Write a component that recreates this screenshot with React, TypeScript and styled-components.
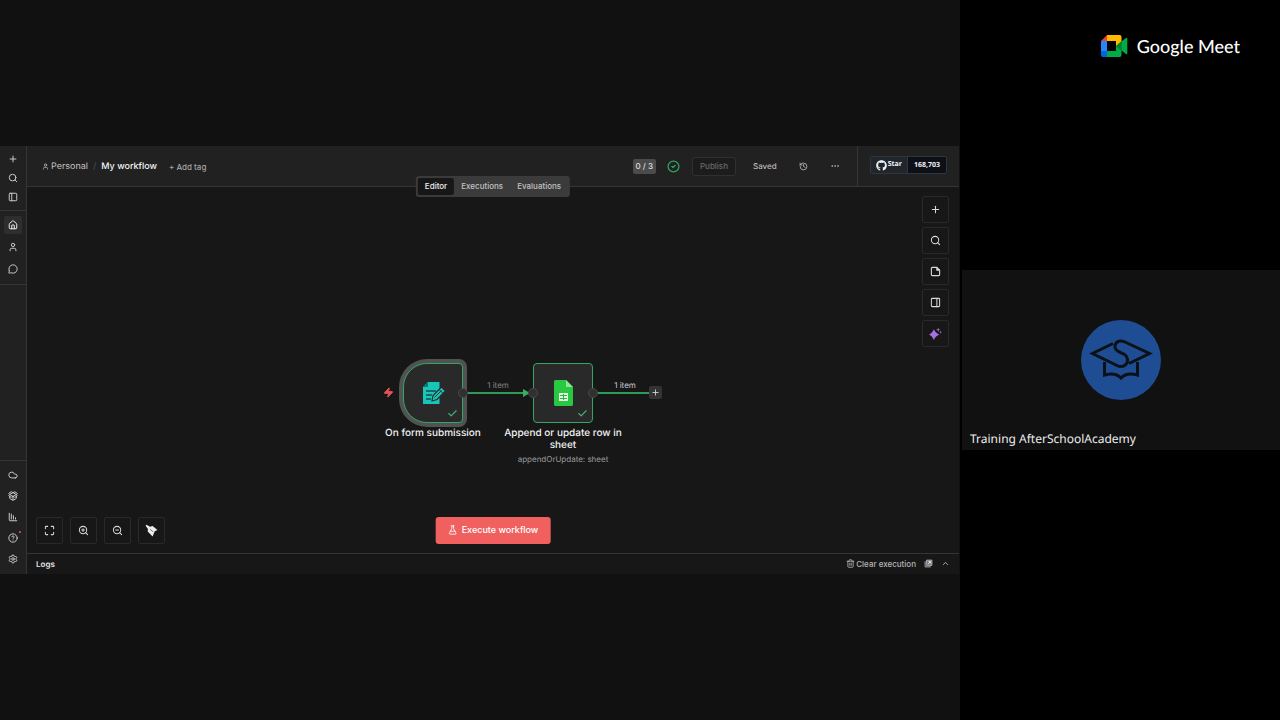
import React from "react";
import styled, { createGlobalStyle, css } from "styled-components";
import {
  ChartColumnDecreasing,
  Check,
  ChevronUp,
  CircleCheck,
  CircleQuestionMark,
  Cloud,
  Ellipsis,
  FlaskConical,
  History,
  House,
  Maximize,
  MessageCircle,
  PackageOpen,
  PanelLeft,
  PanelRight,
  Plus,
  Search,
  Settings,
  Trash2,
  User,
  Zap,
  ZoomIn,
  ZoomOut,
} from "lucide-react";
import { FaGithub } from "react-icons/fa";

const GlobalStyle = createGlobalStyle`
  * { box-sizing: border-box; }
  body {
    margin: 0;
    background: #000;
    font-family: Inter, "Liberation Sans", sans-serif;
    text-rendering: geometricPrecision;
  }
  button { font: inherit; color: inherit; border: 0; padding: 0; background: none; cursor: pointer; }
  a { color: inherit; text-decoration: none; }
  p, h1, h2 { margin: 0; }
  svg { display: block; flex-shrink: 0; }
`;

const Call = styled.div`
  display: grid;
  grid-template-columns: 3fr 1fr;
  min-height: 100vh;
`;

const Presentation = styled.main`
  display: flex;
  align-items: center;
  background: #111111;
`;

const Editor = styled.div`
  flex: 1;
  display: flex;
  aspect-ratio: 960 / 428;
  margin-right: 1px;
  min-width: 0;
  background: #171717;
  color: #c4c4c4;
  font-size: 9px;
  line-height: 12px;
`;

/* Sidebar */

const Sidebar = styled.nav`
  display: flex;
  flex-direction: column;
  width: 27px;
  background: #212121;
  border-right: 1px solid #353535;
`;

const NavGroup = styled.div<{ $tight?: boolean; $bottom?: boolean }>`
  display: flex;
  flex-direction: column;
  align-items: center;
  gap: ${(p) => (p.$tight ? 1 : p.$bottom ? 3 : 4)}px;
  padding: 5px 0 6px;
  ${(p) =>
    p.$bottom
      ? css`
          margin-top: auto;
          border-top: 1px solid #353535;
        `
      : css`
          border-bottom: 1px solid #353535;
        `}
  ${(p) => p.$tight && "padding: 4px 0;"}
`;

const NavButton = styled.button<{ $active?: boolean }>`
  position: relative;
  display: grid;
  place-items: center;
  width: 18px;
  height: 18px;
  border-radius: 2px;
  color: ${(p) => (p.$active ? "#f0f0f0" : "#c8c8c8")};
  background: ${(p) => (p.$active ? "#2e2e2e" : "transparent")};
`;

const Dot = styled.span`
  position: absolute;
  top: 2px;
  right: 1px;
  width: 2px;
  height: 2px;
  border-radius: 50%;
  background: #e0566a;
`;

/* Header */

const Workspace = styled.div`
  flex: 1;
  display: flex;
  flex-direction: column;
  min-width: 0;
`;

const Header = styled.header`
  position: relative;
  display: flex;
  height: 41px;
  background: #212121;
  border-bottom: 1px solid #353535;
`;

const Breadcrumb = styled.div`
  display: flex;
  align-items: center;
  gap: 5px;
  padding: 1px 0 0 15px;
`;

const Crumb = styled.a`
  display: flex;
  align-items: center;
  gap: 2px;
`;

const Slash = styled.span`
  color: #4c4c4c;
`;

const WorkflowName = styled.h1`
  font-size: 9px;
  font-weight: 500;
  color: #f5f5f5;
`;

const AddTag = styled.button`
  margin-left: 7px;
  font-size: 8px;
  font-weight: 500;
  color: #a6a6a6;
`;

const Actions = styled.div`
  display: flex;
  align-items: center;
  margin-left: auto;
  padding-right: 17px;
  font-size: 8px;
  font-weight: 500;
`;

const Counter = styled.span`
  padding: 1px 3px 2px;
  border-radius: 2px;
  background: #4b4b4b;
  color: #dedede;
`;

const StatusButton = styled.button`
  margin: 0 12px 0 11px;
  color: #2fa05f;
`;

const PublishButton = styled.button`
  height: 19px;
  padding: 0 7px;
  border: 1px solid #303030;
  border-radius: 3px;
  background: #1c1c1c;
  color: #6a6a6a;
`;

const Saved = styled.span`
  margin: 0 22px 0 17px;
  color: #b8b8b8;
`;

const HeaderIcon = styled.button`
  margin-right: 22px;
  color: #b0b0b0;
  &:last-child {
    margin-right: 0;
  }
`;

const StarArea = styled.div`
  display: flex;
  align-items: flex-start;
  padding: 10px 12px 0;
  border-left: 1px solid #353535;
`;

const StarBadge = styled.a`
  display: flex;
  height: 18px;
  border: 1px solid #30363d;
  border-radius: 2px;
  background: #0d1117;
  color: #f0f3f6;
  font: bold 7px/18px "Open Sans", sans-serif;
`;

const StarLabel = styled.span`
  display: flex;
  align-items: center;
  gap: 1px;
  padding: 0 5px;
  background: #21262d;
  border-right: 1px solid #30363d;
`;

const StarCount = styled.span`
  padding: 0 6px;
`;

const Tabs = styled.div`
  position: absolute;
  z-index: 1;
  top: 30px;
  left: 50%;
  transform: translateX(-50%);
  display: flex;
  padding: 2px;
  border-radius: 3px;
  background: #3b3b3b;
`;

const Tab = styled.button<{ $active?: boolean }>`
  padding: 0 7px;
  border-radius: 2px;
  font-size: 8px;
  line-height: 17px;
  font-weight: 500;
  color: ${(p) => (p.$active ? "#f0f0f0" : "#c2c2c2")};
  background: ${(p) => (p.$active ? "#171717" : "transparent")};
`;

/* Canvas */

const Canvas = styled.section`
  position: relative;
  flex: 1;
  overflow: hidden;
`;

const Toolbar = styled.div<{ $vertical?: boolean }>`
  position: absolute;
  display: flex;
  ${(p) =>
    p.$vertical
      ? css`
          flex-direction: column;
          gap: 4px;
          top: 9px;
          right: 10px;
        `
      : css`
          gap: 7px;
          bottom: 9px;
          left: 9px;
        `}
`;

const ToolButton = styled.button`
  display: grid;
  place-items: center;
  width: 27px;
  height: 27px;
  border: 1px solid #292929;
  border-radius: 2px;
  background: #171717;
  color: #dadada;
`;

const ExecuteButton = styled.button`
  position: absolute;
  bottom: 9px;
  left: 50%;
  transform: translateX(-50%);
  display: flex;
  align-items: center;
  gap: 4px;
  height: 27px;
  padding: 0 12px;
  border-radius: 3px;
  background: #f0605f;
  color: #fff;
  font-weight: 500;
  white-space: nowrap;
`;

const Diagram = styled.div`
  position: absolute;
  top: calc(50% - 17px);
  left: calc(50% - 110px);
  width: 280px;
  height: 112px;
`;

const Edge = styled.svg`
  position: absolute;
  inset: 0;
`;

const NodeBox = styled.div<{ $x: number; $trigger?: boolean }>`
  position: absolute;
  top: 10px;
  left: ${(p) => p.$x}px;
  display: grid;
  place-items: center;
  width: 60px;
  height: 60px;
  border: 1px solid #36a468;
  border-radius: ${(p) => (p.$trigger ? "24px 4px 4px 24px" : "4px")};
  background: #292929;
  box-shadow: ${(p) => (p.$trigger ? "0 0 0 4px #505351" : "none")};
`;

const NodeCheck = styled(Check)`
  position: absolute;
  right: 4px;
  bottom: 3px;
  color: #3fb37a;
`;

const Handle = styled.span<{ $x: number }>`
  position: absolute;
  top: 35px;
  left: ${(p) => p.$x}px;
  width: 10px;
  height: 10px;
  border: 1px solid #484848;
  border-radius: 50%;
  background: #303030;
`;

const NodeText = styled.div<{ $x: number }>`
  position: absolute;
  top: 74px;
  left: ${(p) => p.$x}px;
  width: 124px;
  text-align: center;
`;

const NodeTitle = styled.h2`
  font-size: 10px;
  line-height: 12px;
  font-weight: 500;
  color: #f2f2f2;
`;

const NodeSubtitle = styled.p`
  margin-top: 2px;
  font-size: 8px;
  line-height: 12px;
  color: #9c9c9c;
`;

const EdgeLabel = styled.span<{ $x: number; $bright?: boolean }>`
  position: absolute;
  top: 26px;
  left: ${(p) => p.$x}px;
  width: 40px;
  text-align: center;
  font-size: 8px;
  color: ${(p) => (p.$bright ? "#cfcfcf" : "#858585")};
`;

const TriggerMark = styled(Zap)`
  position: absolute;
  top: 34px;
  left: 0;
  fill: #e5535a;
  color: #e5535a;
`;

const AddNode = styled.button`
  position: absolute;
  top: 33px;
  left: 266px;
  display: grid;
  place-items: center;
  width: 13px;
  height: 13px;
  border-radius: 2px;
  background: #333333;
  color: #d0d0d0;
`;

const LogsBar = styled.footer`
  display: flex;
  align-items: center;
  gap: 8px;
  height: 21px;
  padding: 0 9px;
  border-top: 1px solid #353535;
  font-size: 8px;
  color: #b5b5b5;
`;

const LogsTitle = styled.h2`
  margin-right: auto;
  font-size: 8px;
  font-weight: 600;
  color: #e2e2e2;
`;

const LogsButton = styled.button`
  display: flex;
  align-items: center;
  gap: 1px;
  font-weight: 500;
`;

/* Call participants */

const Participants = styled.aside`
  display: grid;
  grid-template-rows: 1fr auto 1fr;
  padding-left: 2px;
  background: #000;
`;

const Brand = styled.div`
  display: flex;
  align-items: flex-start;
  justify-content: flex-end;
  gap: 9px;
  padding: 35px 40px 0 0;
  font: 500 18px/22px Lato, sans-serif;
  color: #fff;
`;

const Tile = styled.div`
  display: grid;
  place-items: center;
  position: relative;
  aspect-ratio: 318 / 180;
  background: #111111;
`;

const TileName = styled.p`
  position: absolute;
  left: 8px;
  bottom: 2px;
  font: 12px/18px "Noto Sans", sans-serif;
  color: #ededed;
`;

const NoteIcon = () => (
  <svg width="11" height="11" viewBox="0 0 24 24" fill="none" stroke="currentColor" strokeWidth="2.4" strokeLinejoin="round">
    <path d="M15 3H5a2 2 0 0 0-2 2v14a2 2 0 0 0 2 2h14a2 2 0 0 0 2-2V9z" />
    <path d="M15 3v6h6" fill="currentColor" />
  </svg>
);

const SparkIcon = () => (
  <svg width="13" height="13" viewBox="0 0 24 24" fill="#a86fe0">
    <path d="M9 4c2.500 5 4 7 10 10-6 3-7.500 5-10 10-2.500-5-3.500-7-9-10 5.500-3 6.500-5 9-10z" />
    <path d="M17 1l1 3 3 1-3 1-1 3-1-3-3-1 3-1z" />
    <path d="M21.500 7l.8 1.700 1.700.8-1.700.8-.8 1.700-.8-1.700-1.700-.8 1.700-.8z" />
  </svg>
);

const BroomIcon = () => (
  <svg width="13" height="13" viewBox="0 0 24 24" fill="#ececec">
    <path d="M1 3 3 1.500 9 5l5-1.500 9 7.500-5 2.500L14 23 5 14l.5-5z" />
    <path d="M9 9.500l6 5" stroke="#171717" strokeWidth="1" />
  </svg>
);

const FormIcon = () => (
  <svg width="25" height="24" viewBox="0 0 25 24">
    <path d="M7 1h11.500v22H2V6z" fill="#18c5b9" />
    <path d="M2 6 7 1v5z" fill="#11756f" />
    <path d="M5 10h10M5 14h6M5 18h5" stroke="#1d4a48" strokeWidth="1.500" />
    <path d="M11 20l1-5.500 8.500-8.500 4 4-8.500 8.500z" fill="#18c5b9" stroke="#292929" strokeWidth="1.200" />
    <path d="M13.500 16.500l7-7M18 8.500l3.800 3.800" stroke="#25302f" strokeWidth="1" />
  </svg>
);

const SheetIcon = () => (
  <svg width="19" height="26" viewBox="0 0 19 26">
    <path d="M1.500 0H12l7 7v17.500a1.500 1.500 0 0 1-1.500 1.500h-16A1.500 1.500 0 0 1 0 24.500v-23A1.500 1.500 0 0 1 1.500 0z" fill="#28c840" />
    <path d="M12 0l7 7h-7z" fill="#8ee69b" />
    <path d="M5 13h9v8H5z" fill="#e8f9ea" />
    <path d="M6 15.500h7M6 18.500h7M9.500 14v6" stroke="#28b83e" strokeWidth="1" />
  </svg>
);

const PopOutIcon = () => (
  <svg width="9" height="9" viewBox="0 0 24 24" fill="none" stroke="currentColor" strokeWidth="2.500">
    <path d="M3 6v15h15" />
    <path d="M7 3h14v14H7z" fill="#767676" />
    <path d="M11 13l6-6M12 7h5v5" stroke="#ededed" />
  </svg>
);

const MeetLogo = () => (
  <svg width="27" height="22" viewBox="0 0 27 22">
    <path d="M6 0v6H0z" fill="#ea4335" />
    <path d="M0 6h6v10H0z" fill="#2684fc" />
    <path d="M0 16h6v6H2a2 2 0 0 1-2-2z" fill="#0066da" />
    <path d="M6 0h12.500A2 2 0 0 1 20.500 2v5L15 12V6H6z" fill="#ffba00" />
    <path d="M6 16h9v-5l5.500-3v12a2 2 0 0 1-2 2H6z" fill="#00ac47" />
    <path d="M15 11l5.500-5v10z" fill="#00832d" />
    <path d="M20.500 6.500 25 3c.6-.5 1.300-.1 1.300.6v14.800c0 .7-.7 1.100-1.300.6l-4.500-3.500z" fill="#00ac47" />
  </svg>
);

const AcademyLogo = () => (
  <svg width="80" height="80" viewBox="0 0 80 80" fill="none" stroke="#0b1118" strokeWidth="3">
    <circle cx="40" cy="40" r="40" fill="#1f4d93" stroke="none" />
    <path d="M32 23.500 11.500 33.500 36 45.500C42 48.500 47 44.500 46.500 39.500 46 35 43 34 39.500 32.500 35.500 31 33.500 29 34 25.500 35 21 39.500 19.800 44 22L68.500 33.500 48 43.500" />
    <path d="M23.500 42v13q11-3 16.500 3 5.500-6 16.500-3V42" />
  </svg>
);

const navIcon = { size: 10, strokeWidth: 2.4 };
const toolIcon = { size: 11, strokeWidth: 2.2 };

export default function App() {
  return (
    <Call>
      <GlobalStyle />
      <Presentation>
        <Editor>
          <Sidebar aria-label="Main">
            <NavGroup $tight>
              <NavButton aria-label="Create"><Plus {...navIcon} /></NavButton>
              <NavButton aria-label="Search"><Search {...navIcon} /></NavButton>
              <NavButton aria-label="Toggle sidebar"><PanelLeft {...navIcon} /></NavButton>
            </NavGroup>
            <NavGroup>
              <NavButton $active aria-label="Overview"><House {...navIcon} /></NavButton>
              <NavButton aria-label="Personal"><User {...navIcon} /></NavButton>
              <NavButton aria-label="Chat"><MessageCircle {...navIcon} /></NavButton>
            </NavGroup>
            <NavGroup $bottom>
              <NavButton aria-label="Admin panel"><Cloud {...navIcon} /></NavButton>
              <NavButton aria-label="Templates"><PackageOpen {...navIcon} /></NavButton>
              <NavButton aria-label="Insights"><ChartColumnDecreasing {...navIcon} /></NavButton>
              <NavButton aria-label="Help"><CircleQuestionMark {...navIcon} /><Dot /></NavButton>
              <NavButton aria-label="Settings"><Settings {...navIcon} /></NavButton>
            </NavGroup>
          </Sidebar>
          <Workspace>
            <Header>
              <Breadcrumb>
                <Crumb href="#personal"><User size={7} strokeWidth={2.5} />Personal</Crumb>
                <Slash>/</Slash>
                <WorkflowName>My workflow</WorkflowName>
                <AddTag>+ Add tag</AddTag>
              </Breadcrumb>
              <Actions>
                <Counter>0 / 3</Counter>
                <StatusButton aria-label="Status"><CircleCheck size={13} strokeWidth={2.4} /></StatusButton>
                <PublishButton>Publish</PublishButton>
                <Saved>Saved</Saved>
                <HeaderIcon aria-label="History"><History size={9} strokeWidth={2.4} /></HeaderIcon>
                <HeaderIcon aria-label="More"><Ellipsis size={10} /></HeaderIcon>
              </Actions>
              <StarArea>
                <StarBadge href="#star">
                  <StarLabel><FaGithub size={11} />Star</StarLabel>
                  <StarCount>168,703</StarCount>
                </StarBadge>
              </StarArea>
              <Tabs>
                <Tab $active>Editor</Tab>
                <Tab>Executions</Tab>
                <Tab>Evaluations</Tab>
              </Tabs>
            </Header>
            <Canvas>
              <Diagram>
                <Edge width="280" height="80">
                  <path d="M84 40h58M214 40h52" stroke="#2f9a57" strokeWidth="2" />
                  <path d="M140 36l7 4-7 4z" fill="#35b062" />
                </Edge>
                <TriggerMark size={11} />
                <NodeBox $x={20} $trigger><FormIcon /><NodeCheck size={11} strokeWidth={2.5} /></NodeBox>
                <NodeBox $x={150}><SheetIcon /><NodeCheck size={11} strokeWidth={2.5} /></NodeBox>
                <Handle $x={75} />
                <Handle $x={145} />
                <Handle $x={205} />
                <EdgeLabel $x={95}>1 item</EdgeLabel>
                <EdgeLabel $x={222} $bright>1 item</EdgeLabel>
                <AddNode aria-label="Add node"><Plus size={9} strokeWidth={2.4} /></AddNode>
                <NodeText $x={-12}><NodeTitle>On form submission</NodeTitle></NodeText>
                <NodeText $x={118}>
                  <NodeTitle>Append or update row in sheet</NodeTitle>
                  <NodeSubtitle>appendOrUpdate: sheet</NodeSubtitle>
                </NodeText>
              </Diagram>
              <Toolbar $vertical>
                <ToolButton aria-label="Add node"><Plus {...toolIcon} /></ToolButton>
                <ToolButton aria-label="Search nodes"><Search {...toolIcon} /></ToolButton>
                <ToolButton aria-label="Add note"><NoteIcon /></ToolButton>
                <ToolButton aria-label="Toggle panel"><PanelRight {...toolIcon} /></ToolButton>
                <ToolButton aria-label="Assistant"><SparkIcon /></ToolButton>
              </Toolbar>
              <Toolbar>
                <ToolButton aria-label="Fit view"><Maximize {...toolIcon} /></ToolButton>
                <ToolButton aria-label="Zoom in"><ZoomIn {...toolIcon} /></ToolButton>
                <ToolButton aria-label="Zoom out"><ZoomOut {...toolIcon} /></ToolButton>
                <ToolButton aria-label="Tidy up"><BroomIcon /></ToolButton>
              </Toolbar>
              <ExecuteButton><FlaskConical size={10} />Execute workflow</ExecuteButton>
            </Canvas>
            <LogsBar>
              <LogsTitle>Logs</LogsTitle>
              <LogsButton><Trash2 size={9} strokeWidth={2.2} />Clear execution</LogsButton>
              <LogsButton aria-label="Pop out"><PopOutIcon /></LogsButton>
              <LogsButton aria-label="Expand"><ChevronUp size={9} strokeWidth={2.4} /></LogsButton>
            </LogsBar>
          </Workspace>
        </Editor>
      </Presentation>
      <Participants>
        <Brand><MeetLogo />Google Meet</Brand>
        <Tile>
          <AcademyLogo />
          <TileName>Training AfterSchoolAcademy</TileName>
        </Tile>
      </Participants>
    </Call>
  );
}
